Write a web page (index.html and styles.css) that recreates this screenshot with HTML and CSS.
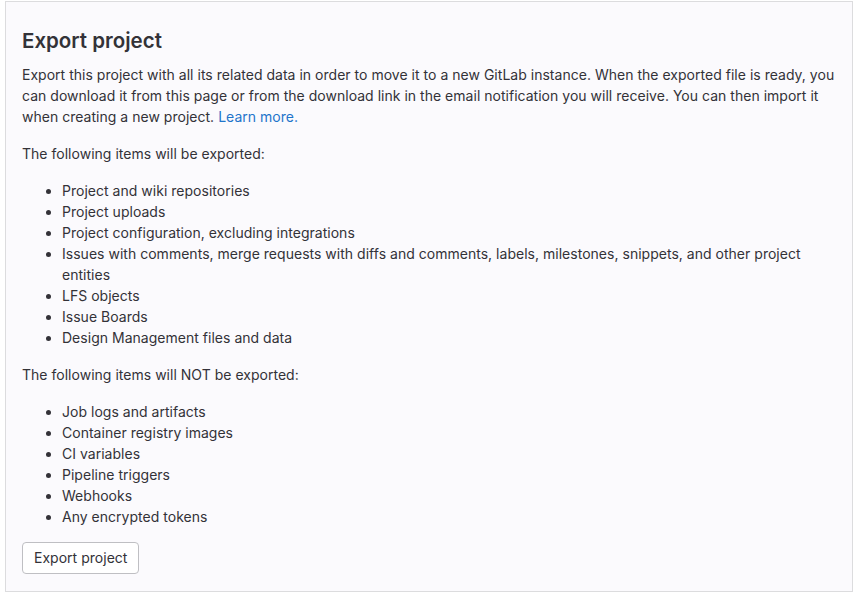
FILE: index.html
```html
<!DOCTYPE html>
<html>
<head>
<meta charset="utf-8">
<link rel="stylesheet" href="styles.css">
</head>
<body>
<section class="panel">
  <h4 class="title">Export project</h4>
  <p class="text">Export this project with all its related data in order to move it to a new GitLab instance. When the exported file is ready, you can download it from this page or from the download link in the email notification you will receive. You can then import it when creating a new project. <a href="#" class="link">Learn more.</a></p>
  <p class="text">The following items will be exported:</p>
  <ul class="items">
    <li>Project and wiki repositories</li>
    <li>Project uploads</li>
    <li>Project configuration, excluding integrations</li>
    <li>Issues with comments, merge requests with diffs and comments, labels, milestones, snippets, and other project entities</li>
    <li>LFS objects</li>
    <li>Issue Boards</li>
    <li>Design Management files and data</li>
  </ul>
  <p class="text">The following items will NOT be exported:</p>
  <ul class="items items-last">
    <li>Job logs and artifacts</li>
    <li>Container registry images</li>
    <li>CI variables</li>
    <li>Pipeline triggers</li>
    <li>Webhooks</li>
    <li>Any encrypted tokens</li>
  </ul>
  <button class="btn" type="button">Export project</button>
</section>
</body>
</html>
```
FILE: styles.css
```css
html, body {
  margin: 0;
  padding: 0;
  background: #ffffff;
}
body {
  padding: 1px 3px 0 5px;
  font-family: Inter, "Noto Sans", sans-serif;
  font-size: 14px;
  line-height: 21px;
  letter-spacing: 0.02px;
  color: #333238;
}
.panel {
  background: #fbfafd;
  border: 1px solid #dcdcde;
  padding: 19px 16px 16px 16px;
  height: 554px;
}
.title {
  margin: 0 0 3px 0;
  font-size: 20.5px;
  line-height: 40px;
  font-weight: 600;
  letter-spacing: 0;
  color: #333238;
}
.text {
  margin: 0 0 16px 0;
}
.link {
  color: #1f75cb;
  text-decoration: none;
}
.items {
  margin: 0 0 16px 0;
  padding-left: 40px;
}
.items-last {
  margin-bottom: 15px;
}
.btn {
  font-family: Inter, "Noto Sans", sans-serif;
  font-size: 14px;
  line-height: 16px;
  letter-spacing: 0.02px;
  color: #333238;
  background: #ffffff;
  border: 1px solid #bfbfc3;
  border-radius: 4px;
  padding: 7px 11px;
  height: 32px;
}
```
